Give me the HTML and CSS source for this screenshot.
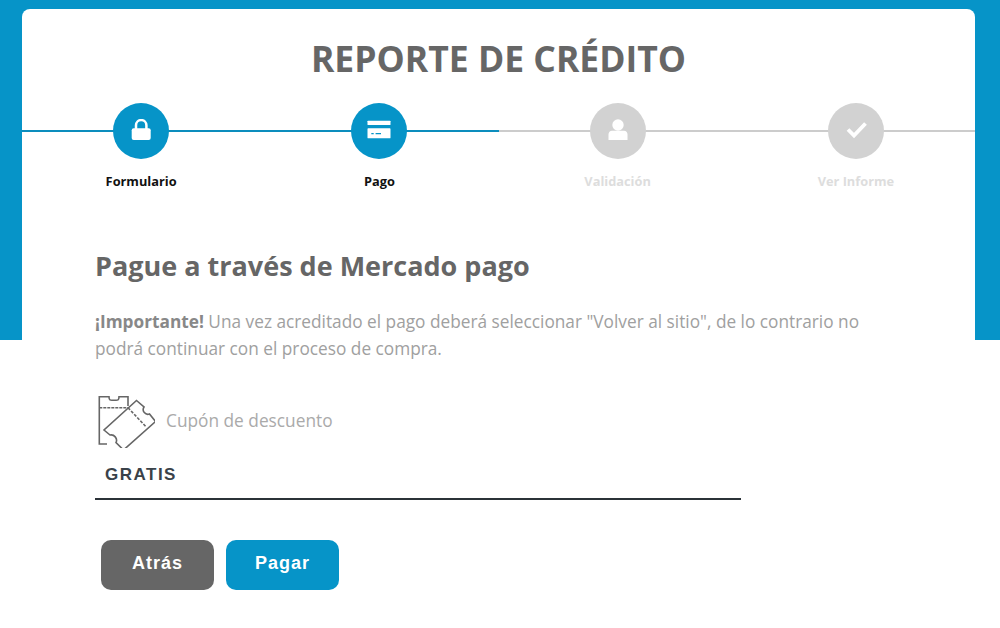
FILE: index.html
```html
<!DOCTYPE html>
<html lang="es">
<head>
    <meta charset="UTF-8">
    <meta name="viewport" content="width=device-width, initial-scale=1.0">
    <title>Reporte de crédito</title>
    <link rel="stylesheet" href="styles.css">
</head>
<body>
    <main class="card">
        <h1>REPORTE DE CRÉDITO</h1>

        <div class="steps">
            <div class="step done">
                <div class="circle">
                    <svg width="24" height="24" viewBox="0 0 24 24"><rect x="2.700" y="9.300" width="19" height="11.800" rx="2" fill="#fff"/><path d="M7 10V6.300a5.200 5.200 0 0 1 10.400 0V10" fill="none" stroke="#fff" stroke-width="2.500"/></svg>
                </div>
                <span>Formulario</span>
            </div>
            <div class="step done">
                <div class="circle">
                    <svg width="24" height="24" viewBox="0 0 24 24"><rect x=".5" y="1.700" width="23" height="4.300" rx=".6" fill="#fff"/><path fill-rule="evenodd" d="M1.100 9.300h21.800c.3 0 .6.300.6.600v8.800c0 .3-.3.6-.6.6H1.100c-.3 0-.6-.3-.6-.6V9.900c0-.3.3-.6.600-.6zM4.300 14v1.300h2.400V14zm4.300 0v1.300H14V14z" fill="#fff"/></svg>
                </div>
                <span>Pago</span>
            </div>
            <div class="step">
                <div class="circle">
                    <svg width="24" height="24" viewBox="0 0 24 24"><circle cx="12" cy="6" r="5.700" fill="#fff"/><path d="M6 11.700h12c2 0 3.500 1.600 3.500 3.600V21h-19v-5.700c0-2 1.500-3.600 3.500-3.600z" fill="#fff"/></svg>
                </div>
                <span>Validación</span>
            </div>
            <div class="step">
                <div class="circle">
                    <svg width="24" height="24" viewBox="0 0 24 24"><path d="M4 10.500l6 6L21.500 4.500" fill="none" stroke="#fff" stroke-width="3.800"/></svg>
                </div>
                <span>Ver Informe</span>
            </div>
        </div>

        <section class="content">
            <h2>Pague a través de Mercado pago</h2>
            <p class="note"><strong>¡Importante!</strong> Una vez acreditado el pago deberá seleccionar "Volver al sitio", de lo contrario no podrá continuar con el proceso de compra.</p>

            <div class="coupon">
                <label class="coupon-label" for="coupon">
                    <svg width="60" height="56" viewBox="3 1 60 56" fill="none" stroke="#666" stroke-width="1.600">
                        <path d="M15 53H7.300V5.700H17c0 4.500 2 3.500 5 3.500s5 1 5-3.500h9V15"/>
                        <path d="M7.300 16.700H36" stroke-dasharray="3 1"/>
                        <path d="M44.500 9.500L52 16c-2.500 4 1.500 8.500 5.500 7l6 7.500L31.500 59 24 51.500c2-4-2-8.500-6-7.500l-6-5z"/>
                        <path d="M36 16.700l17.500 18.500" stroke-dasharray="3 1.500"/>
                    </svg>
                    Cupón de descuento
                </label>
                <input id="coupon" class="coupon-input" type="text" value="GRATIS">
            </div>

            <div class="actions">
                <button class="btn btn-back">Atrás</button>
                <button class="btn btn-pay">Pagar</button>
            </div>
        </section>
    </main>
</body>
</html>
```

FILE: styles.css
```css
* {
    box-sizing: border-box;
}
body {
    margin: 0;
    height: 628px;
    overflow: hidden;
    padding: 9px 25px 0 22px;
    background: linear-gradient(#0694c8 340px, #fff 340px);
    font-family: "Open Sans", sans-serif;
}
.card {
    background: #fff;
    border-radius: 8px 8px 0 0;
    height: 619px;
}
h1 {
    margin: 0;
    padding-top: 26px;
    height: 94px;
    text-align: center;
    font-size: 35.500px;
    line-height: 46px;
    font-weight: 700;
    color: #666;
}
.steps {
    display: grid;
    grid-template-columns: repeat(4, 1fr);
}
.step {
    display: flex;
    flex-direction: column;
    align-items: center;
    background: linear-gradient(#ccc, #ccc) 0 27px / 100% 2px no-repeat;
}
.step.done {
    background-image: linear-gradient(#0c8dbd, #0c8dbd);
}
.circle {
    width: 56px;
    height: 56px;
    border-radius: 50%;
    background: #d2d2d2;
    display: flex;
    align-items: center;
    justify-content: center;
}
.done .circle {
    background: #0694c8;
}
.step span {
    margin-top: 14px;
    font-size: 12.800px;
    line-height: 16px;
    font-weight: 700;
    color: #ddd;
}
.step.done span {
    color: #111;
}
.content {
    padding: 60px 0 0 73px;
}
h2 {
    margin: 0;
    font-size: 27px;
    line-height: 34px;
    font-weight: 700;
    color: #666;
}
.note {
    margin: 25px 0 0;
    width: 800px;
    font-size: 17.250px;
    line-height: 27px;
    color: #a0a0a0;
}
.note strong {
    color: #888;
}
.coupon {
    margin-top: 30px;
    width: 646px;
}
.coupon-label {
    display: flex;
    align-items: center;
    gap: 11px;
    font-size: 17.300px;
    color: #aaa;
}
.coupon-input {
    display: block;
    width: 100%;
    height: 53px;
    border: 0;
    border-bottom: 2px solid #2b3238;
    padding: 4px 10px 0;
    margin-top: -1px;
    outline: none;
    font-family: "Liberation Sans", sans-serif;
    font-size: 17px;
    font-weight: 700;
    letter-spacing: 1.500px;
    color: #3a4249;
}
.actions {
    display: flex;
    gap: 12px;
    margin: 40px 0 0 6px;
}
.btn {
    width: 113px;
    height: 50px;
    border: 0;
    border-radius: 10px;
    padding: 0 0 4px;
    font-family: "Liberation Sans", sans-serif;
    font-size: 18px;
    font-weight: 700;
    letter-spacing: 1px;
    color: #fff;
    cursor: pointer;
}
.btn-back {
    background: #666;
}
.btn-pay {
    background: #0694c8;
}
```
